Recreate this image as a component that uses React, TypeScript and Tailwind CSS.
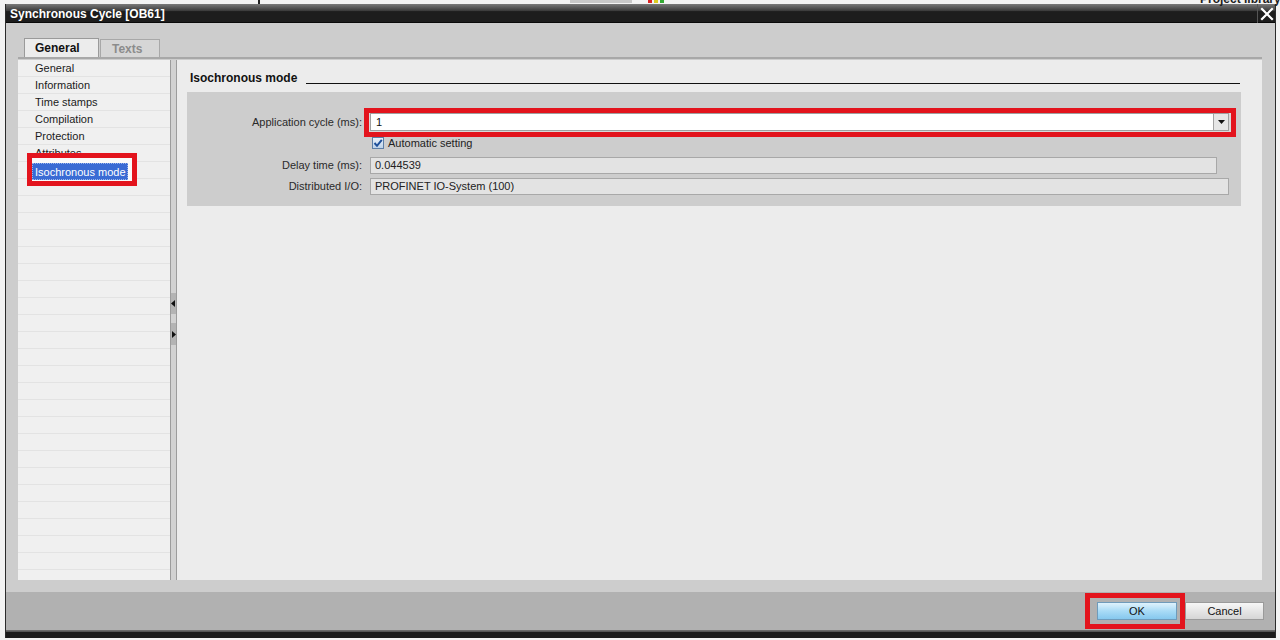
const NAV = ['General', 'Information', 'Time stamps', 'Compilation', 'Protection', 'Attributes', ''];

function CloseIcon() {
    return (
        <svg width="14" height="14" viewBox="0 0 14 14">
            <path d="M2 2 L12 12 M12 2 L2 12" stroke="#fff" strokeWidth="2.2" strokeLinecap="square" />
        </svg>
    );
}

function CheckBox() {
    return (
        <div className="w-[12px] h-[12px] border border-[#5c7ea6] bg-[linear-gradient(to_bottom,#e9f1fa,#bcd2ea)] flex items-center justify-center">
            <svg width="10" height="10" viewBox="0 0 10 10">
                <path d="M1.5 5 L4 7.8 L8.8 1.8" fill="none" stroke="#1d4f9a" strokeWidth="2" />
            </svg>
        </div>
    );
}

export default function App() {
    const rows = Array.from({ length: 30 });

    return (
        <div className="relative w-[1280px] h-[640px] overflow-hidden bg-[#f3f3f3] pt-[4px] pl-[5px] pr-[4px] pb-[2px] font-['Liberation_Sans',Arial,sans-serif]">
            {/* bits of the app behind the dialog */}
            <div className="absolute left-[258px] top-0 w-[2px] h-[4px] bg-[#222]" />
            <div className="absolute left-[570px] top-0 w-[62px] h-[3px] bg-[#c8c8c8]" />
            <div className="absolute left-[648px] top-0 w-[4px] h-[3px] bg-[#d22]" />
            <div className="absolute left-[654px] top-0 w-[4px] h-[3px] bg-[#dc2]" />
            <div className="absolute left-[660px] top-0 w-[4px] h-[3px] bg-[#3a3]" />
            <div className="absolute left-[1200px] top-[-8px] whitespace-nowrap text-[12px] font-bold text-[#222] leading-[14px]">Project library</div>

            {/* Dialog */}
            <div className="h-full flex flex-col border-x border-[#2b2b2b] bg-[#cdcdcd]">
                {/* Title bar */}
                <div className="h-[19px] flex items-center justify-between pl-[4px] bg-[linear-gradient(to_bottom,#7a7a7a_0%,#3c3c3c_35%,#1d1d1d_40%,#1d1d1d_92%,#000_100%)]">
                    <span className="text-[12px] font-bold text-white leading-none">Synchronous Cycle [OB61]</span>
                    <div className="w-[18px] h-[19px] border-l border-[#555] flex items-center justify-center">
                        <CloseIcon />
                    </div>
                </div>

                {/* Body */}
                <div className="flex-1 flex flex-col pl-[12px] pr-[13px] pt-[15px]">
                    {/* Tabs */}
                    <div className="h-[19px] flex items-end pl-[6px] gap-px">
                        <div className="w-[75px] h-[19px] bg-[#ececec] border border-b-0 border-[#9a9a9a] pl-[10px] flex items-center text-[12px] font-bold text-[#111]">
                            General
                        </div>
                        <div className="w-[60px] h-[18px] bg-[#d6d6d6] border border-b-0 border-[#a8a8a8] pl-[11px] flex items-center text-[12px] font-bold text-[#8c8c8c]">
                            Texts
                        </div>
                    </div>

                    {/* Content */}
                    <div className="border-t-2 border-[#a8a8a8] pt-px">
                        <div className="h-[520px] flex">
                            {/* Navigation */}
                            <div className="relative w-[152px] bg-[#f0f0f0] flex flex-col overflow-hidden">
                                {rows.map((_, i) => (
                                    <div key={i} className="h-[17px] shrink-0 border-b border-[#e3e3e3] pl-[17px] text-[11px] leading-[16px] text-[#1b1b1b]">
                                        {NAV[i] ?? ''}
                                    </div>
                                ))}
                                <div className="absolute left-[9px] top-[93px] w-[110px] h-[33px] border-[5px] border-[#e3141d] bg-[#fafafa] pt-[5px]">
                                    <div className="w-[96px] h-[17px] bg-[#3a6bd4] pl-[2px] text-[11px] leading-[16px] text-white border border-dotted border-[#9ab4ea]">
                                        Isochronous mode
                                    </div>
                                </div>
                            </div>

                            {/* Splitter */}
                            <div className="w-[7px] bg-[#d2d2d2] border-x border-[#9c9c9c] flex flex-col pt-[233px] gap-[9px]">
                                <div className="h-[21px] bg-[#b4b4b4] flex items-center justify-center">
                                    <svg width="5" height="7" viewBox="0 0 5 7"><path d="M4 0 L0 3.5 L4 7 Z" fill="#111" /></svg>
                                </div>
                                <div className="h-[22px] bg-[#b4b4b4] flex items-center justify-center">
                                    <svg width="5" height="7" viewBox="0 0 5 7"><path d="M1 0 L5 3.5 L1 7 Z" fill="#111" /></svg>
                                </div>
                            </div>

                            {/* Properties */}
                            <div className="flex-1 bg-[#ececec] pt-[10px]">
                                <div className="h-[16px] flex items-center pl-[13px] pr-[22px]">
                                    <span className="text-[12px] font-bold text-[#111]">Isochronous mode</span>
                                    <div className="flex-1 h-px bg-[#111] ml-[9px] mt-[10px]" />
                                </div>

                                <div className="mt-[6px] ml-[10px] mr-[21px] bg-[#cdcdcd] pt-[16px] pb-[11px] text-[11px] text-[#2a2a2a]">
                                    <div className="h-[29px] flex items-center">
                                        <div className="w-[175px] text-right">Application cycle (ms):</div>
                                        <div className="ml-[2px] w-[872px] h-[29px] border-[5px] border-[#e3141d] bg-[#d9d9d9] flex items-start pl-px pr-[2px]">
                                            <div className="flex-1 h-[18px] bg-white border border-[#9f9f9f] flex items-center">
                                                <span className="flex-1 pl-[5px] text-[#111]">1</span>
                                                <div className="w-[15px] h-full border-l border-[#a3a3a3] bg-[#e6e6e6] flex items-center justify-center">
                                                    <svg width="7" height="4" viewBox="0 0 7 4"><path d="M0 0 L7 0 L3.5 4 Z" fill="#111" /></svg>
                                                </div>
                                            </div>
                                        </div>
                                    </div>

                                    <div className="h-[12px] flex items-center">
                                        <div className="w-[185px]" />
                                        <CheckBox />
                                        <span className="ml-[4px] text-[#222]">Automatic setting</span>
                                    </div>

                                    <div className="mt-[8px] h-[17px] flex items-center">
                                        <div className="w-[175px] text-right">Delay time (ms):</div>
                                        <div className="ml-[8px] w-[847px] h-[17px] bg-[#e3e3e3] border border-[#a8a8a8] pl-[4px] flex items-center text-[#222]">
                                            0.044539
                                        </div>
                                    </div>

                                    <div className="mt-[4px] h-[17px] flex items-center">
                                        <div className="w-[175px] text-right">Distributed I/O:</div>
                                        <div className="ml-[8px] w-[859px] h-[17px] bg-[#e3e3e3] border border-[#a8a8a8] pl-[4px] flex items-center text-[#222]">
                                            PROFINET IO-System (100)
                                        </div>
                                    </div>
                                </div>
                            </div>
                        </div>
                    </div>
                </div>

                {/* Button bar */}
                <div className="mt-[12px] h-[38px] bg-[#b1b1b1] flex items-center justify-end pr-[11px]">
                    <div className="w-[100px] h-[36px] border-[5px] border-[#e3141d] flex items-center pl-[7px] pr-[3px]">
                        <div className="w-[80px] h-[18px] border border-[#6f9bbb] bg-[linear-gradient(to_bottom,#dff2fc_0%,#a9dbf6_50%,#86c8ee_100%)] flex items-center justify-center text-[11px] text-[#111]">
                            OK
                        </div>
                    </div>
                    <div className="w-[79px] h-[18px] border border-[#9a9a9a] bg-[linear-gradient(to_bottom,#f7f7f7_0%,#e6e6e6_50%,#d6d6d6_100%)] flex items-center justify-center text-[11px] text-[#111]">
                        Cancel
                    </div>
                </div>
                <div className="h-[8px] bg-[linear-gradient(to_bottom,#6a6a6a_0%,#6a6a6a_15%,#1c1c1c_30%,#1c1c1c_100%)]" />
            </div>
        </div>
    );
}
